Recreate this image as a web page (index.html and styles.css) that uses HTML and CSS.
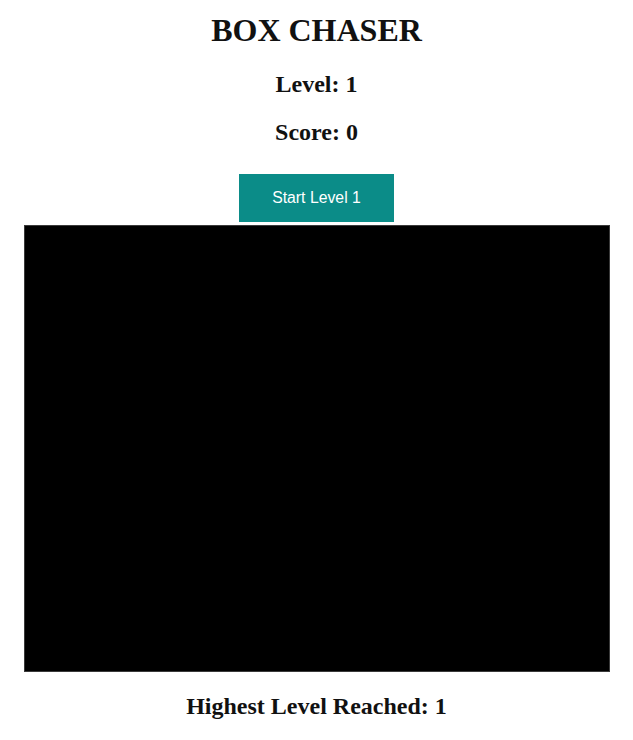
FILE: index.html
```html
<!DOCTYPE html>
<html>
<head>
<meta charset="utf-8">
<title>Box Chaser</title>
<link rel="stylesheet" href="styles.css">
</head>
<body>
<main class="game">
  <h1 class="title">BOX CHASER</h1>
  <h2 class="stat stat-level">Level: 1</h2>
  <h2 class="stat stat-score">Score: 0</h2>
  <button class="start-btn" type="button">Start Level 1</button>
  <div class="board"></div>
  <h2 class="stat stat-high">Highest Level Reached: 1</h2>
</main>
</body>
</html>
```

FILE: styles.css
```css
html, body {
  margin: 0;
  padding: 0;
  background: #ffffff;
}

.game {
  display: flex;
  flex-direction: column;
  align-items: center;
  font-family: "Liberation Serif", "Times New Roman", serif;
  color: #111111;
  padding-top: 12px;
}

.title {
  margin: 0;
  font-size: 32px;
  line-height: 36px;
  font-weight: bold;
}

.stat {
  margin: 0;
  font-size: 24px;
  line-height: 28px;
  font-weight: bold;
}

.stat-level {
  margin-top: 22px;
}

.stat-score {
  margin-top: 20px;
}

.start-btn {
  margin-top: 28px;
  width: 155px;
  height: 48px;
  border: none;
  background: #0b8c88;
  color: #ffffff;
  font-family: "Liberation Sans", Arial, sans-serif;
  font-size: 15.8px;
  padding: 0;
  cursor: pointer;
}

.board {
  margin-top: 3px;
  width: 586px;
  height: 447px;
  background: #000000;
  box-sizing: border-box;
  border: 1px solid #3a3a3a;
}

.stat-high {
  margin-top: 20px;
}
```
